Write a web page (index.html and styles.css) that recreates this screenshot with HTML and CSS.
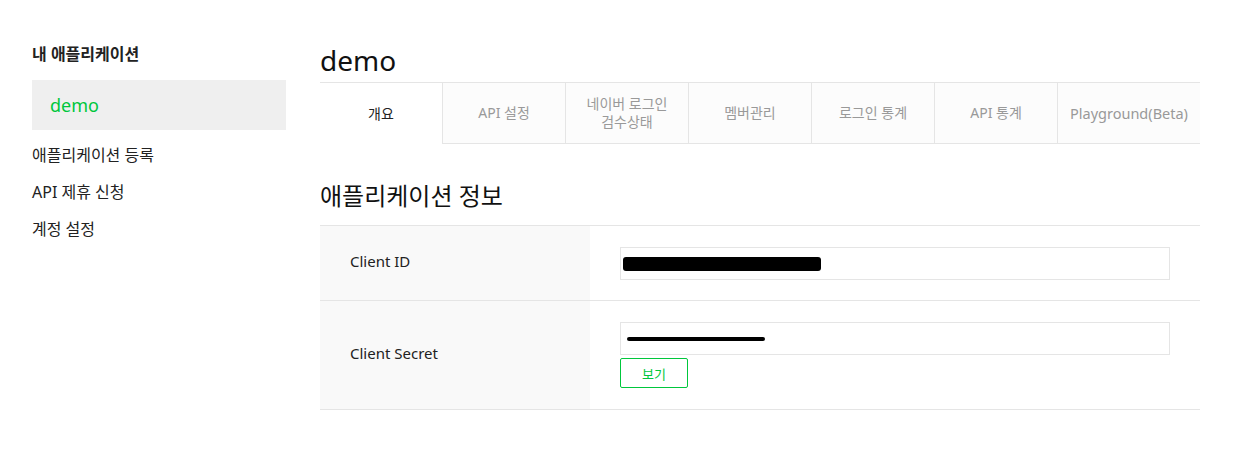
FILE: index.html
```html
<!DOCTYPE html>
<html lang="ko">
<head>
<meta charset="utf-8">
<link rel="stylesheet" href="styles.css">
</head>
<body>
<div class="page">
  <aside class="side">
    <h2 class="side-title">내 애플리케이션</h2>
    <div class="side-app">demo</div>
    <ul class="side-menu">
      <li>애플리케이션 등록</li>
      <li>API 제휴 신청</li>
      <li>계정 설정</li>
    </ul>
  </aside>
  <main class="main">
    <h1 class="app-title">demo</h1>
    <nav class="tabs">
      <div class="tab active">개요</div>
      <div class="tab">API 설정</div>
      <div class="tab">네이버 로그인<br>검수상태</div>
      <div class="tab">멤버관리</div>
      <div class="tab">로그인 통계</div>
      <div class="tab">API 통계</div>
      <div class="tab last">Playground(Beta)</div>
    </nav>
    <h2 class="section-title">애플리케이션 정보</h2>
    <div class="info">
      <div class="row">
        <div class="label">Client ID</div>
        <div class="value">
          <div class="field"><span class="redact r1"></span></div>
        </div>
      </div>
      <div class="row row2">
        <div class="label">Client Secret</div>
        <div class="value">
          <div class="field"><span class="redact r2"></span></div>
          <button class="btn">보기</button>
        </div>
      </div>
    </div>
  </main>
</div>
</body>
</html>
```
FILE: styles.css
```css
* { box-sizing: border-box; margin: 0; padding: 0; }
body {
  font-family: "Noto Sans", "Noto Sans CJK KR", sans-serif;
  color: #222;
  background: #fff;
}
.page {
  display: flex;
  padding: 0 36px 0 32px;
}
.side {
  width: 254px;
  flex: none;
  padding-top: 42px;
}
.side-title {
  font-size: 16px;
  font-weight: 700;
  line-height: 24px;
  color: #222;
  margin-bottom: 14px;
}
.side-app {
  height: 50px;
  background: #efefef;
  color: #00c73c;
  font-size: 18px;
  line-height: 50px;
  padding-left: 18px;
}
.side-menu {
  list-style: none;
  margin-top: 13px;
}
.side-menu li {
  font-size: 16px;
  line-height: 24px;
  margin-bottom: 13px;
  color: #222;
}
.main {
  flex: 1;
  margin-left: 34px;
  padding-top: 40px;
}
.app-title {
  font-size: 28px;
  font-weight: 400;
  line-height: 40px;
  color: #111;
  margin-bottom: 2px;
}
.tabs {
  display: flex;
  border-top: 1px solid #e5e5e5;
  height: 62px;
}
.tab {
  width: 123px;
  flex: none;
  display: flex;
  align-items: center;
  justify-content: center;
  text-align: center;
  font-size: 14px;
  line-height: 18px;
  color: #999;
  background: #fcfcfc;
  border-left: 1px solid #e5e5e5;
  border-bottom: 1px solid #e5e5e5;
}
.tab.active {
  width: 122px;
  background: #fff;
  border-left: none;
  border-bottom: none;
  color: #222;
}
.tab.last {
  flex: 1;
  width: auto;
  font-size: 14.5px;
}
.section-title {
  font-size: 24px;
  font-weight: 400;
  line-height: 34px;
  color: #111;
  margin-top: 35px;
  margin-bottom: 12px;
}
.info {
  border-top: 1px solid #e5e5e5;
}
.row {
  display: flex;
  border-bottom: 1px solid #e5e5e5;
  height: 75px;
}
.row2 { height: 109px; }
.label {
  width: 270px;
  flex: none;
  background: #f9f9f9;
  padding-left: 30px;
  padding-bottom: 5px;
  display: flex;
  align-items: center;
  font-size: 15px;
  color: #222;
}
.row2 .label { padding-bottom: 4px; }
.value {
  flex: 1;
  padding: 21px 30px 0 30px;
}
.field {
  height: 33px;
  border: 1px solid #e5e5e5;
  background: #fff;
  display: flex;
  align-items: center;
  padding-left: 2px;
}
.redact {
  display: block;
  background: #000;
  border-radius: 3px;
}
.r1 { width: 198px; height: 14px; }
.r2 { width: 138px; height: 4px; margin-left: 4px; border-radius: 2px; }
.btn {
  display: block;
  margin-top: 3px;
  width: 68px;
  height: 30px;
  border: 1px solid #00c73c;
  border-radius: 2px;
  background: #fff;
  color: #00c73c;
  font-family: "Noto Sans", "Noto Sans CJK KR", sans-serif;
  font-size: 13px;
}
```
